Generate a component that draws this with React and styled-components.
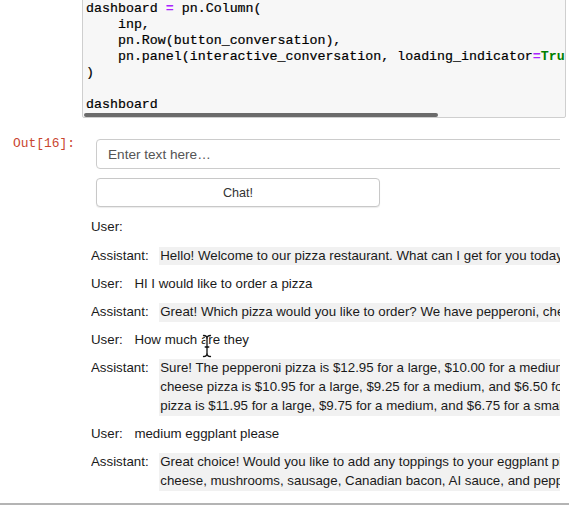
import React from 'react';
import styled, { createGlobalStyle } from 'styled-components';

const GlobalStyle = createGlobalStyle`
  html,
  body {
    margin: 0;
    padding: 0;
    background: #fff;
    overflow: hidden;
  }
`;

const sans = `"Liberation Sans", Arial, Helvetica, sans-serif`;
const mono = `"Liberation Mono", "Courier New", monospace`;

const messages = [
  { role: 'User', lines: [''] },
  {
    role: 'Assistant',
    lines: ['Hello! Welcome to our pizza restaurant. What can I get for you today?'],
  },
  { role: 'User', lines: ['HI I would like to order a pizza'] },
  {
    role: 'Assistant',
    lines: [
      'Great! Which pizza would you like to order? We have pepperoni, cheese, and eggplant pizza.',
    ],
  },
  { role: 'User', lines: ['How much are they'], cursor: true },
  {
    role: 'Assistant',
    lines: [
      'Sure! The pepperoni pizza is $12.95 for a large, $10.00 for a medium, and $7.00 for a small. The',
      'cheese pizza is $10.95 for a large, $9.25 for a medium, and $6.50 for a small. The eggplant',
      'pizza is $11.95 for a large, $9.75 for a medium, and $6.75 for a small.',
    ],
  },
  { role: 'User', lines: ['medium eggplant please'] },
  {
    role: 'Assistant',
    lines: [
      'Great choice! Would you like to add any toppings to your eggplant pizza? We have extra',
      'cheese, mushrooms, sausage, Canadian bacon, AI sauce, and peppers.',
    ],
  },
];

const IBeam = () => (
  <CursorIcon width="12" height="24" viewBox="0 0 12 24">
    <g fill="none" strokeLinecap="round">
      <g stroke="#fff" strokeWidth="3.2">
        <path d="M2.5 1.5 Q6 1.5 6 4.5 Q6 1.5 9.5 1.5" />
        <path d="M6 4.5 V19.5" />
        <path d="M2.5 22.5 Q6 22.5 6 19.5 Q6 22.5 9.5 22.5" />
        <path d="M4.2 13 H7.8" />
      </g>
      <g stroke="#111" strokeWidth="1.3">
        <path d="M2.5 1.5 Q6 1.5 6 4.5 Q6 1.5 9.5 1.5" />
        <path d="M6 4.5 V19.5" />
        <path d="M2.5 22.5 Q6 22.5 6 19.5 Q6 22.5 9.5 22.5" />
        <path d="M4.2 13 H7.8" />
      </g>
    </g>
  </CursorIcon>
);

const App = () => {
  return (
    <Page>
      <GlobalStyle />
      <CodeCell>
        <Code>
          {'dashboard '}
          <Op>=</Op>
          {' pn.Column(\n    inp,\n    pn.Row(button_conversation),\n    pn.panel(interactive_conversation, loading_indicator'}
          <Op>=</Op>
          <Keyword>True</Keyword>
          {')\n)\n\ndashboard'}
        </Code>
        <ScrollTrack>
          <ScrollThumb />
        </ScrollTrack>
      </CodeCell>

      <OutputRow>
        <Prompt>Out[16]:</Prompt>
        <OutputArea>
          <TextInput placeholder="Enter text here…" />
          <ChatButton>Chat!</ChatButton>
          <ChatList>
            {messages.map((m, i) => (
              <ChatRow key={i}>
                <Label>{m.role}:</Label>
                <Message $assistant={m.role === 'Assistant'}>
                  {m.lines.map((line, j) => (
                    <Line key={j}>{line}</Line>
                  ))}
                  {m.cursor && <IBeam />}
                </Message>
              </ChatRow>
            ))}
          </ChatList>
        </OutputArea>
      </OutputRow>

      <BottomRule />
    </Page>
  );
};

const Page = styled.div`
  width: 569px;
  height: 508px;
  display: flex;
  flex-direction: column;
  overflow: hidden;
  background: #fff;
`;

const CodeCell = styled.div`
  box-sizing: border-box;
  width: 484px;
  margin: -5px 0 0 82px;
  padding: 5px 0 0 3px;
  background: #f7f7f7;
  border: 1px solid #cfcfcf;
  border-radius: 2px;
  overflow: hidden;
  flex-shrink: 0;
`;

const Code = styled.pre`
  margin: 0;
  font-family: ${mono};
  font-size: 13.3px;
  line-height: 16px;
  color: #000;
  white-space: pre;
  overflow: hidden;
  -webkit-text-stroke: 0.2px #000;
`;

const Op = styled.span`
  color: #aa22ff;
  font-weight: bold;
  -webkit-text-stroke: 0;
`;

const Keyword = styled.span`
  color: #008000;
  font-weight: bold;
  -webkit-text-stroke: 0;
`;

const ScrollTrack = styled.div`
  height: 4px;
  margin-left: -2px;
`;

const ScrollThumb = styled.div`
  width: 354px;
  height: 4px;
  border-radius: 2px;
  background: #6b6b6b;
`;

const OutputRow = styled.div`
  display: flex;
  margin-top: 18px;
  flex-shrink: 0;
`;

const Prompt = styled.div`
  box-sizing: border-box;
  width: 91px;
  padding-left: 13px;
  font-family: ${mono};
  font-size: 12.9px;
  line-height: 16px;
  color: #c9452f;
`;

const OutputArea = styled.div`
  width: 469px;
  padding-top: 3px;
  overflow: hidden;
  display: flex;
  flex-direction: column;
  align-items: flex-start;
`;

const TextInput = styled.input`
  box-sizing: border-box;
  width: 520px;
  height: 30px;
  margin-left: 5px;
  padding: 0 11px;
  border: 1px solid #cccccc;
  border-radius: 4px;
  background: #fff;
  font-family: ${sans};
  font-size: 13.6px;
  color: #222;
  outline: none;

  &::placeholder {
    color: #555;
  }
`;

const ChatButton = styled.button`
  box-sizing: border-box;
  width: 284px;
  height: 29px;
  margin: 9px 0 0 5px;
  border: 1px solid #c8c8c8;
  border-radius: 4px;
  background: #fff;
  box-shadow: 0 1px 1px rgba(0, 0, 0, 0.08);
  font-family: ${sans};
  font-size: 12.6px;
  color: #333;
  padding: 0;
`;

const ChatList = styled.div`
  display: flex;
  flex-direction: column;
  gap: 9.4px;
  margin-top: 11.4px;
`;

const ChatRow = styled.div`
  display: flex;
  align-items: flex-start;
  font-family: ${sans};
  font-size: 13.3px;
  line-height: 18.8px;
  color: #1a1a1a;
`;

const Label = styled.div`
  flex-shrink: 0;
`;

const Message = styled.div`
  position: relative;
  margin-left: 10.6px;
  min-height: 18.8px;
  background: ${({ $assistant }) => ($assistant ? '#f1f1f1' : 'transparent')};
  white-space: nowrap;
`;

const Line = styled.div`
  padding-left: 1px;
`;

const CursorIcon = styled.svg`
  position: absolute;
  left: 68px;
  top: 3px;
`;

const BottomRule = styled.div`
  margin-top: auto;
  margin-bottom: 3px;
  height: 2px;
  background: #b4b4b4;
  flex-shrink: 0;
`;

export default App;
